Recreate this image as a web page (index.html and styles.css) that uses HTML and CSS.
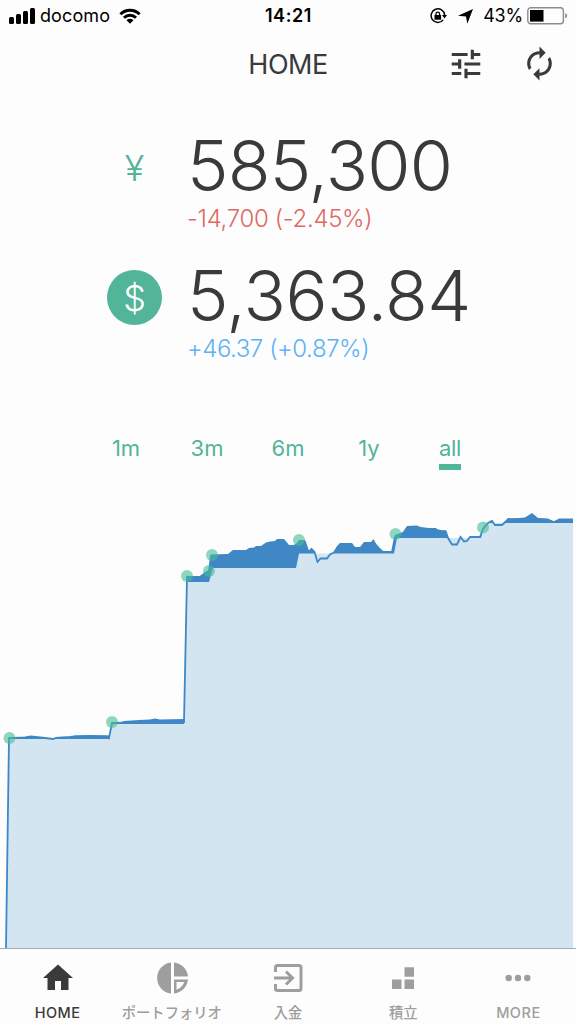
FILE: index.html
```html
<!DOCTYPE html>
<html lang="ja">
<head>
    <meta charset="UTF-8">
    <meta name="viewport" content="width=device-width, initial-scale=1">
    <title>HOME</title>
    <link rel="stylesheet" href="styles.css">
</head>
<body>
    <div class="status">
        <div class="status-left">
            <svg class="signal" width="27" height="16" viewBox="0 0 27 16">
                <rect x="0" y="9" width="5" height="7" rx="1.5"/>
                <rect x="7" y="6" width="5" height="10" rx="1.5"/>
                <rect x="14" y="3" width="5" height="13" rx="1.5"/>
                <rect x="21" y="0" width="5" height="16" rx="1.5"/>
            </svg>
            <span class="carrier">docomo</span>
            <svg class="wifi" width="22" height="16" viewBox="0 0 22 16">
                <path d="M1.4 6.2a13.6 13.6 0 0 1 19.2 0M5 9.7a8.5 8.5 0 0 1 12 0" fill="none" stroke="#000" stroke-width="3"/>
                <path d="M11 15.7l-3.5-3.4a5 5 0 0 1 7 0z"/>
            </svg>
        </div>
        <span class="clock">14:21</span>
        <div class="status-right">
            <svg class="lock" width="17" height="16" viewBox="0 0 17 16">
                <path d="M13.2 11.9A6.8 6.8 0 1 1 14.7 7" fill="none" stroke="#000" stroke-width="1.5"/>
                <path d="M12 7h5l-2.500 3.500z"/>
                <rect x="4.500" y="7" width="6.600" height="4.800" rx=".6"/>
                <path d="M6 7.500V6a1.800 1.800 0 0 1 3.600 0v1.500" fill="none" stroke="#000" stroke-width="1.3"/>
            </svg>
            <svg class="arrow" width="15" height="15" viewBox="0 0 15 15">
                <path d="M15 0L9.300 14.700 8 7.400 0 6.800z"/>
            </svg>
            <span class="percent">43%</span>
            <svg width="41" height="18" viewBox="0 0 41 18">
                <rect x=".8" y=".8" width="35.6" height="16" rx="3" fill="none" stroke="#8c8c8c" stroke-width="1.4"/>
                <rect x="3" y="3" width="13.5" height="11.6"/>
                <path d="M38.2 6.2q2 .4 2 2.5t-2 2.5z" fill="#8c8c8c"/>
            </svg>
        </div>
    </div>

    <header class="header">
        <h1>HOME</h1>
        <div class="actions">
            <svg class="tune" width="38" height="38" viewBox="0 0 24 24">
                <path d="M3 17v2h6v-2H3zM3 5v2h10V5H3zm10 16v-2h8v-2h-8v-2h-2v6h2zM7 9v2H3v2h4v2h2V9H7zm14 4v-2H11v2h10zm-6-4h2V7h4V5h-4V3h-2v6z"/>
            </svg>
            <svg width="37" height="37" viewBox="0 0 24 24">
                <path d="M12 6v3l4-4-4-4v3c-4.420 0-8 3.580-8 8 0 1.570.46 3.030 1.240 4.260L6.700 14.800c-.45-.83-.7-1.790-.7-2.800 0-3.310 2.690-6 6-6zm6.760 1.740L17.300 9.200c.44.840.7 1.790.7 2.800 0 3.310-2.690 6-6 6v-3l-4 4 4 4v-3c4.420 0 8-3.580 8-8 0-1.570-.46-3.030-1.240-4.260z"/>
            </svg>
        </div>
    </header>

    <main>
        <div class="balance">
            <span class="currency">¥</span>
            <div>
                <div class="amount yen">585,300</div>
                <div class="change down">-14,700 (-2.45%)</div>
            </div>
        </div>
        <div class="balance">
            <span class="currency active">$</span>
            <div>
                <div class="amount usd">5,363.84</div>
                <div class="change up">+46.37 (+0.87%)</div>
            </div>
        </div>

        <div class="period">
            <span>1m</span>
            <span>3m</span>
            <span>6m</span>
            <span>1y</span>
            <span><b class="selected">all</b></span>
        </div>

        <svg class="chart" width="576" height="449" viewBox="0 500 576 449">
            <!-- asset value -->
            <path class="value" d="M6 948L9 738 25 737.500 31 736.500 45 738 53 739 56 738 70 737 75 735.500 90 735 108 735.500 109 738 112 722.500 120 722.500 124 721 139 720 150 719.500 155 718.500 160 719.500 184 719 187 576 200 576 205 572 209 570 211 554.500 228 554 233 550 246 550 249 548 254 547.500 256 546 261 546 266 542.500 270 541.500 275 541 277 539 284 539 289 545 293 545 296 544 299 540 305 540 308.500 552 311.500 547.500 314.500 552 317.500 562 320.500 558.500 327 558.500 330 554.500 334 553 337 546 340 543 352 543 355 547 360 547 364 542 371 542 373.500 539 376 543.500 383 552 386 551.500 392 551.500 395 535 403 532 407 526 417 525.500 422 528 436 528 439 531 446 530 448 538 452 544.500 457 544.500 460.500 537 464 541.500 467 541 470 537 480 537 483 529 488 523 492 520 495 525 502 525 508 518 513 518.500 525 517.500 532 513 538 518 548 518.500 554 522 559 518.500 573 518.500V948z"/>
            <!-- principal -->
            <path class="principal" d="M6 948L9 739H109L112 724H184L187 582H209L213 568H296L299 553.500H394L397 538H481L484 523H573V948z"/>
            <path class="line" d="M6 948L9 738 25 737.500 31 736.500 45 738 53 739 56 738 70 737 75 736.500 108 736.500 109 738 112 723 184 722 187 577 200 577 209 571 211 556 228 556 233 552 246 552 261 548 275 543 284 541 289 547 296 546 299 542 305 542 308.500 552 311.500 549 314.500 552 317.500 562 320.500 558.500 327 558.500 330 554.500 334 552.500 337 548 341 545 351 545 354 549 361 549 365 544 371 544 376 546 383 552 392 552 395 537 403 534 407 528 417 527.500 436 530 446 532 448 538 452 544.500 457 544.500 460.500 537 464 541.500 467 541 470 537 480 537 483 529 488 523 492 521 495 525 502 525 508 519.500 525 519 532 515 538 519.500 548 520 554 522 559 520 573 520"/>
            <g class="deposits">
                <circle cx="9.500" cy="738" r="6"/>
                <circle cx="112" cy="722" r="6"/>
                <circle cx="187" cy="576" r="6"/>
                <circle cx="209" cy="571" r="6"/>
                <circle cx="212" cy="555" r="6"/>
                <circle cx="299" cy="540" r="6"/>
                <circle cx="395.500" cy="534" r="6"/>
                <circle cx="483" cy="527.500" r="6"/>
            </g>
            <path class="axis" d="M0 948.500H576"/>
        </svg>
    </main>

    <nav class="tabbar">
        <a class="tab current">
            <svg width="36" height="36" viewBox="0 0 24 24"><path d="M10 20v-6h4v6h5v-8h3L12 3 2 12h3v8z"/></svg>
            <span>HOME</span>
        </a>
        <a class="tab">
            <svg width="36" height="36" viewBox="0 0 36 36">
                <path d="M16 2.500v31A15.600 15.600 0 0 1 16 2.500zM19 2.500A15.600 15.600 0 0 1 33 16.500h-14z"/>
                <path fill-rule="evenodd" d="M19 19.500h14A15.600 15.600 0 0 1 19 33.500zM21.500 22v7.700q5.500-2 7.800-7.700z"/>
            </svg>
            <span class="long">ポートフォリオ</span>
        </a>
        <a class="tab">
            <svg width="36" height="36" viewBox="0 0 36 36">
                <path d="M5.500 12V7.500a2 2 0 0 1 2-2h21.500a2 2 0 0 1 2 2v21a2 2 0 0 1-2 2H7.500a2 2 0 0 1-2-2V24M4 18h18M16 11.500l6.500 6.500-6.500 6.500" fill="none" stroke="#9e9e9e" stroke-width="3"/>
            </svg>
            <span>入金</span>
        </a>
        <a class="tab">
            <svg width="36" height="36" viewBox="0 0 36 36"><path d="M19.500 7.300h9.500v9.500h-9.500zM7 19.500h9.500v9.500H7zM19.500 19.500h9.500v9.500h-9.500z"/></svg>
            <span>積立</span>
        </a>
        <a class="tab more">
            <svg width="36" height="36" viewBox="0 0 36 36"><circle cx="8.700" cy="18" r="3.200"/><circle cx="18" cy="18" r="3.200"/><circle cx="27.300" cy="18" r="3.200"/></svg>
            <span>MORE</span>
        </a>
    </nav>
</body>
</html>
```
FILE: styles.css
```css
* {
    box-sizing: border-box;
}
body {
    margin: 0;
    width: 576px;
    height: 1024px;
    overflow: hidden;
    display: flex;
    flex-direction: column;
    background: #fdfdfd;
    color: #3a3a3a;
    font-family: Inter, "Noto Sans CJK JP", sans-serif;
}
svg {
    display: block;
    flex: none;
}

/* status bar */
.status {
    height: 32px;
    display: grid;
    grid-template-columns: 1fr auto 1fr;
    align-items: center;
    padding: 0 8px 0 9px;
    color: #000;
    font-size: 18px;
    line-height: 32px;
}
.status-left, .status-right {
    display: flex;
    align-items: center;
}
.status-right {
    justify-content: flex-end;
}
.carrier {
    margin: 0 9px 0 4px;
    letter-spacing: 0.1px;
}
.clock {
    font-weight: 600;
    letter-spacing: 0.6px;
}
.arrow {
    margin: 0 10px 0 11px;
}
.percent {
    margin-right: 4px;
    letter-spacing: -0.2px;
}

/* title */
.header {
    height: 66px;
    display: grid;
    grid-template-columns: 1fr auto 1fr;
    align-items: center;
}
.header h1 {
    grid-column: 2;
    margin: 0;
    font-size: 27px;
    font-weight: 400;
    letter-spacing: -0.5px;
    line-height: 66px;
}
.actions {
    display: flex;
    justify-content: flex-end;
    gap: 36px;
    margin-top: -2px;
    padding-right: 18px;
    fill: #3a3a3a;
}

/* balances */
main {
    padding-top: 28px;
}
.balance {
    height: 130px;
    display: flex;
    padding-left: 107px;
}
.currency {
    width: 55px;
    height: 55px;
    margin: 14px 25px 0 0;
    border-radius: 50%;
    color: #52b498;
    font-size: 36px;
    font-weight: 300;
    line-height: 57px;
    text-align: center;
}
.currency.active {
    background: #52b498;
    color: #fff;
}
.amount {
    height: 80px;
    font-size: 70px;
    font-weight: 300;
    letter-spacing: -0.8px;
    line-height: 80px;
    white-space: nowrap;
}
.usd {
    letter-spacing: -0.5px;
}
.change {
    font-size: 24px;
    font-weight: 300;
    letter-spacing: -0.33px;
    line-height: 26px;
    white-space: nowrap;
}
.down {
    color: #dd6a65;
}
.up {
    color: #5eb1f4;
    letter-spacing: -0.44px;
}

/* period switch */
.period {
    height: 114px;
    display: grid;
    grid-template-columns: repeat(5, 81px);
    justify-content: center;
    padding-top: 45px;
    color: #52b498;
    font-size: 22px;
    line-height: 34px;
    text-align: center;
}
.selected {
    display: inline-block;
    height: 39px;
    border-bottom: 6px solid #52b498;
    font-weight: 400;
    letter-spacing: -0.3px;
}

/* chart */
.value {
    fill: #3f88c5;
}
.principal {
    fill: #d4e5f2;
}
.line {
    fill: none;
    stroke: #3f88c5;
    stroke-width: 1.8;
}
.deposits {
    fill: #46bd99;
    fill-opacity: 0.6;
}
.axis {
    stroke: #9eafbd;
}

/* bottom tabs */
.tabbar {
    height: 75px;
    display: grid;
    grid-template-columns: repeat(5, 1fr);
    padding-top: 11px;
}
.tab {
    display: flex;
    flex-direction: column;
    align-items: center;
    color: #9e9e9e;
    fill: #9e9e9e;
    font-size: 14.3px;
    font-weight: 500;
    line-height: 20px;
}
.tab span {
    margin-top: 7px;
    white-space: nowrap;
}
.tab .long {
    margin-left: -2px;
}
.current {
    color: #3a3a3a;
    fill: #3a3a3a;
}
.current span, .more span {
    font-size: 14.5px;
    letter-spacing: 0.5px;
}
```
